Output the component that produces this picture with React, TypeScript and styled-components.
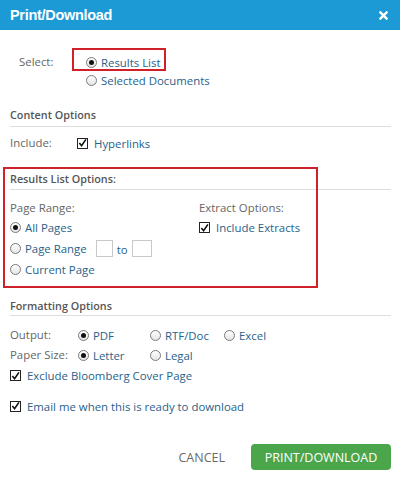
import React from "react";
import styled, { createGlobalStyle } from "styled-components";
import { FaTimes } from "react-icons/fa";

const Global = createGlobalStyle`
  html, body { margin: 0; padding: 0; background: #fff; }
  body { font-family: "Open Sans", "Liberation Sans", Arial, sans-serif; }
  * { box-sizing: border-box; }
`;

const Dialog = styled.div`
  width: 400px;
  height: 478px;
  background: #fff;
  display: flex;
  flex-direction: column;
  overflow: hidden;
`;

const Header = styled.div`
  height: 30px;
  background: #1b9ad6;
  display: flex;
  align-items: center;
  justify-content: space-between;
  padding: 0 10px 0 10px;
`;

const Title = styled.h1`
  margin: 0;
  color: #fff;
  font-family: "Liberation Sans", Arial, sans-serif;
  font-weight: 700;
  font-size: 14.5px;
  letter-spacing: -0.3px;
`;

const Close = styled.span`
  color: #fff;
  display: flex;
  align-items: center;
`;

const Body = styled.div`
  padding: 0 9px 0 10px;
  display: flex;
  flex-direction: column;
`;

const SelectBlock = styled.div`
  margin-top: 23px;
  display: grid;
  grid-template-columns: 67px auto;
  padding-left: 9px;
`;

const Label = styled.span<{ $w?: number }>`
  color: #666;
  font-size: 11.4px;
  line-height: 18px;
  ${(p) => (p.$w ? `width: ${p.$w}px; flex: none;` : "")}
`;

const OptionCol = styled.div`
  display: flex;
  flex-direction: column;
`;

const Option = styled.label<{ $h?: number; $w?: number }>`
  position: relative;
  display: flex;
  align-items: center;
  height: ${(p) => p.$h ?? 18}px;
  ${(p) => (p.$w ? `width: ${p.$w}px; flex: none;` : "")}
  color: #28628a;
  font-size: 11.4px;
  white-space: nowrap;
`;

const RadioDot = styled.span<{ $on?: boolean }>`
  width: 11px;
  height: 11px;
  border-radius: 50%;
  border: 1px solid #7a7a7a;
  background: linear-gradient(#fdfdfd, #e6e6e6);
  display: inline-flex;
  align-items: center;
  justify-content: center;
  margin-right: 4px;
  flex: none;
  &::after {
    content: "";
    width: 5px;
    height: 5px;
    border-radius: 50%;
    background: ${(p) => (p.$on ? "#111" : "transparent")};
  }
`;

const Box = styled.span`
  width: 11px;
  height: 11px;
  border: 1px solid #222;
  background: #fff;
  display: inline-flex;
  align-items: center;
  justify-content: center;
  margin-right: 6px;
  flex: none;
`;

const Highlight = styled.span<{ $l: number; $t: number; $w: number; $h: number }>`
  position: absolute;
  left: ${(p) => p.$l}px;
  top: ${(p) => p.$t}px;
  width: ${(p) => p.$w}px;
  height: ${(p) => p.$h}px;
  border: 2px solid #d0212b;
  pointer-events: none;
`;

const Heading = styled.div<{ $mt: number; $pb: number }>`
  margin-top: ${(p) => p.$mt}px;
  padding-bottom: ${(p) => p.$pb}px;
  border-bottom: 1px solid #dedede;
  color: #555;
  font-size: 10.8px;
  font-weight: 600;
  line-height: 16px;
`;

const Row = styled.div<{ $mt?: number; $h?: number }>`
  display: flex;
  align-items: center;
  margin-top: ${(p) => p.$mt ?? 0}px;
  height: ${(p) => p.$h ?? 18}px;
`;

const ResultsSection = styled.section`
  position: relative;
  display: flex;
  flex-direction: column;
  padding-bottom: 8px;
`;

const TwoCols = styled.div`
  display: grid;
  grid-template-columns: 189px auto;
  margin-top: 8px;
`;

const Col = styled.div`
  display: flex;
  flex-direction: column;
`;

const ColLabel = styled.div`
  color: #666;
  font-size: 11.4px;
  height: 19px;
  line-height: 19px;
`;

const SmallInput = styled.span<{ $w: number }>`
  display: inline-block;
  width: ${(p) => p.$w}px;
  height: 17px;
  border: 1px solid #c8c8c8;
  background: #fff;
`;

const To = styled.span`
  color: #28628a;
  font-size: 11.4px;
  margin: 2px 4px 0 4px;
`;

const RangeRow = styled.div`
  display: flex;
  align-items: center;
  height: 21px;
`;

const Spacer = styled.span<{ $w: number }>`
  width: ${(p) => p.$w}px;
  flex: none;
`;

const Footer = styled.div`
  margin-top: 28px;
  display: flex;
  justify-content: flex-end;
  align-items: center;
  gap: 26px;
`;

const Cancel = styled.button`
  background: none;
  border: none;
  padding: 0;
  color: #6a6a6a;
  font-family: inherit;
  font-size: 12.5px;
  text-transform: uppercase;
`;

const Primary = styled.button`
  width: 140px;
  height: 26px;
  border: none;
  border-radius: 4px;
  background: #4ba64b;
  color: #fff;
  font-family: inherit;
  font-size: 12.5px;
  padding: 0;
`;

const Check = () => (
  <svg width="10" height="10" viewBox="0 0 10 10">
    <path d="M1.5 5 L4 8 L8.8 1" fill="none" stroke="#111" strokeWidth="1.8" />
  </svg>
);

export default function App() {
  return (
    <>
      <Global />
      <Dialog>
        <Header>
          <Title>Print/Download</Title>
          <Close>
            <FaTimes size={13} />
          </Close>
        </Header>
        <Body>
          <SelectBlock>
            <Label>Select:</Label>
            <OptionCol>
              <Option>
                <Highlight $l={-14} $t={-5} $w={94} $h={23} />
                <RadioDot $on />
                Results List
              </Option>
              <Option>
                <RadioDot />
                Selected Documents
              </Option>
            </OptionCol>
          </SelectBlock>

          <Heading $mt={18} $pb={3}>Content Options</Heading>
          <Row $mt={7}>
            <Label $w={67}>Include:</Label>
            <Option>
              <Box>
                <Check />
              </Box>
              Hyperlinks
            </Option>
          </Row>

          <ResultsSection>
            <Highlight $l={-7} $t={15} $w={315} $h={121} />
            <Heading $mt={19} $pb={2}>Results List Options:</Heading>
            <TwoCols>
              <Col>
                <ColLabel>Page Range:</ColLabel>
                <Option $h={21}>
                  <RadioDot $on />
                  All Pages
                </Option>
                <RangeRow>
                  <Option $h={21}>
                    <RadioDot />
                    Page Range
                  </Option>
                  <Spacer $w={9} />
                  <SmallInput $w={17} />
                  <To>to</To>
                  <SmallInput $w={20} />
                </RangeRow>
                <Option $h={21}>
                  <RadioDot />
                  Current Page
                </Option>
              </Col>
              <Col>
                <ColLabel>Extract Options:</ColLabel>
                <Option $h={21}>
                  <Box>
                    <Check />
                  </Box>
                  Include Extracts
                </Option>
              </Col>
            </TwoCols>
          </ResultsSection>

          <Heading $mt={10} $pb={1}>Formatting Options</Heading>
          <Row $mt={9} $h={20}>
            <Label $w={68}>Output:</Label>
            <Option $h={20} $w={72}>
              <RadioDot $on />
              PDF
            </Option>
            <Option $h={20} $w={74}>
              <RadioDot />
              RTF/Doc
            </Option>
            <Option $h={20}>
              <RadioDot />
              Excel
            </Option>
          </Row>
          <Row $h={20}>
            <Label $w={68}>Paper Size:</Label>
            <Option $h={20} $w={72}>
              <RadioDot $on />
              Letter
            </Option>
            <Option $h={20}>
              <RadioDot />
              Legal
            </Option>
          </Row>
          <Row $h={21}>
            <Option $h={21}>
              <Box>
                <Check />
              </Box>
              Exclude Bloomberg Cover Page
            </Option>
          </Row>
          <Row $mt={10} $h={20}>
            <Option $h={20}>
              <Box>
                <Check />
              </Box>
              Email me when this is ready to download
            </Option>
          </Row>
          <Footer>
            <Cancel>Cancel</Cancel>
            <Primary>PRINT/DOWNLOAD</Primary>
          </Footer>
        </Body>
      </Dialog>
    </>
  );
}
